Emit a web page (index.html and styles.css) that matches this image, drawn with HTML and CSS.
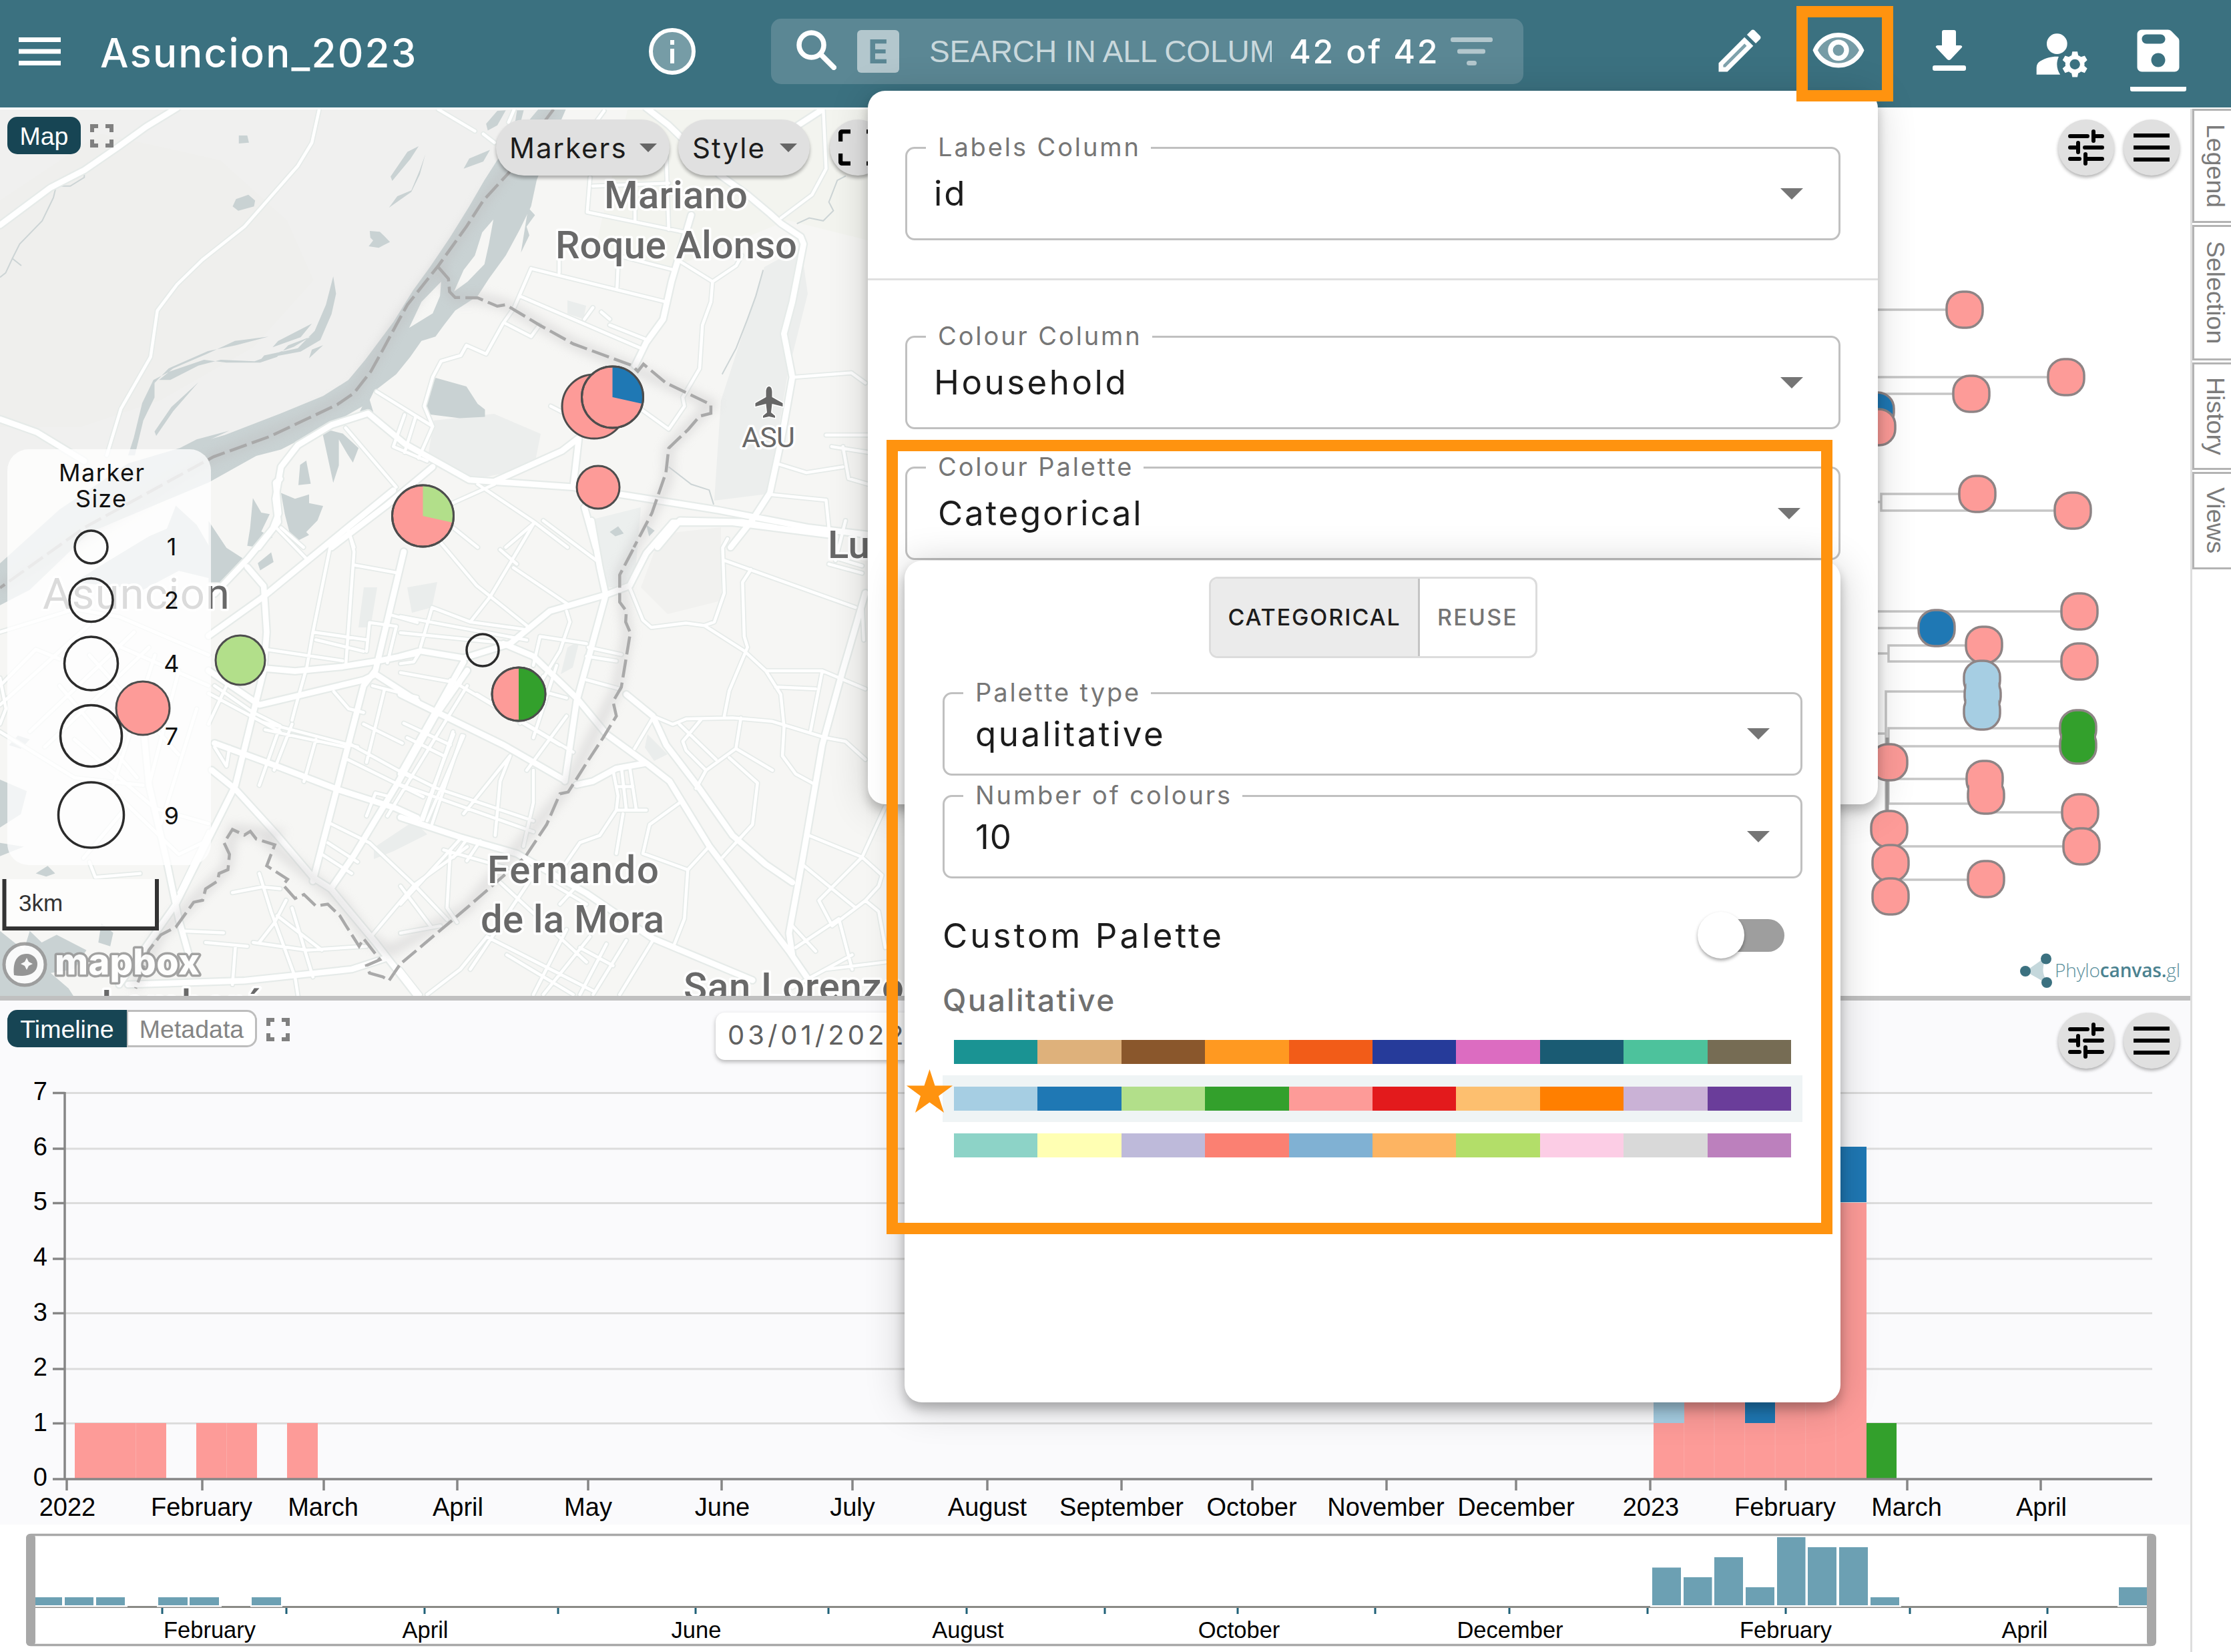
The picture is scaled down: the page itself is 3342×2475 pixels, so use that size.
FILE: index.html
```html
<!DOCTYPE html>
<html lang="en">
<head>
<meta charset="utf-8">
<title>Asuncion_2023</title>
<link rel="stylesheet" href="styles.css">
</head>
<body>
<div class="app">
  <header class="topbar">
    <svg class="burger" viewBox="0 0 63 42"><path d="M0 0h63v7H0zM0 17.500h63v7H0zM0 35h63v7H0z"/></svg>
    <h1 class="title">Asuncion_2023</h1>
    <svg class="info" viewBox="0 0 70 70"><circle cx="35" cy="35" r="32" fill="#fff" fill-opacity=".3" stroke="#fff" stroke-width="6"/><path d="M32 18h6v7h-6zM32 31h6v22h-6z"/></svg>
    <div class="search">
      <svg class="lens" viewBox="0 0 60 60"><circle cx="22.500" cy="22.500" r="18.500" fill="none" stroke="#fff" stroke-width="7.500"/><path d="M36 36L56 56" stroke="#fff" stroke-width="8" stroke-linecap="round"/></svg>
      <span class="badge-e">E</span>
      <span class="placeholder">SEARCH IN ALL COLUM</span>
      <span class="count">42 of 42</span>
      <svg class="filter" viewBox="0 0 63 42"><rect width="63" height="7" rx="3"/><rect x="10" y="17.500" width="42" height="7" rx="3"/><rect x="24" y="35" width="15" height="7" rx="3.500"/></svg>
    </div>
    <nav class="actions">
      <svg class="ic" viewBox="0 0 24 24"><path d="M5 18.080V19h.92l9.060-9.060-.92-.92z" opacity=".35"/><path d="M20.710 7.040c.39-.39.39-1.020 0-1.410l-2.340-2.340c-.2-.2-.45-.29-.71-.29s-.51.100-.7.290l-1.830 1.830 3.750 3.750 1.830-1.830zM3 17.250V21h3.750L17.810 9.940l-3.750-3.750L3 17.250zM5.920 19H5v-.92l9.060-9.060.92.920L5.920 19z"/></svg>
      <svg class="ic eye" viewBox="0 0 24 24"><path d="M12 6c-3.790 0-7.170 2.130-8.820 5.500C4.830 14.870 8.210 17 12 17s7.170-2.130 8.820-5.500C19.170 8.130 15.790 6 12 6z" opacity=".3"/><path fill-rule="evenodd" d="M12 4C7 4 2.730 7.110 1 11.500 2.730 15.890 7 19 12 19s9.270-3.110 11-7.500C21.270 7.110 17 4 12 4zm0 13c-3.790 0-7.170-2.130-8.820-5.500C4.830 8.130 8.210 6 12 6s7.170 2.130 8.820 5.500C19.170 14.870 15.790 17 12 17zM12 7a4.500 4.500 0 1 0 0 9 4.500 4.500 0 0 0 0-9zm0 6.900a2.400 2.400 0 1 1 0-4.800 2.400 2.400 0 0 1 0 4.800z"/></svg>
      <svg class="dl" viewBox="0 0 50 62"><path d="M17 0h15a3 3 0 0 1 3 3v20h7q4 1 1 4L27 44q-2.500 2-5 0L6 27q-3-3 1-4h7V3a3 3 0 0 1 3-3z"/><rect y="53" width="50" height="8" rx="3"/></svg>
      <svg class="user" viewBox="0 0 24 24"><circle cx="10" cy="8" r="4"/><path d="M10.670 13.020c-.22-.01-.44-.02-.67-.02-2.420 0-4.680.67-6.610 1.820-.88.520-1.390 1.500-1.390 2.530V20h9.260c-.79-1.130-1.260-2.510-1.260-4 0-1.070.25-2.070.67-2.980zM20.750 16c0-.22-.03-.42-.06-.63l1.140-1.010-1-1.730-1.450.49c-.32-.27-.68-.48-1.080-.63L18 11h-2l-.3 1.490c-.4.15-.76.36-1.080.63l-1.450-.49-1 1.730 1.140 1.010c-.03.21-.06.41-.06.63s.03.42.06.63l-1.140 1.010 1 1.730 1.450-.49c.32.27.68.48 1.080.63L16 21h2l.3-1.490c.4-.15.76-.36 1.080-.63l1.450.49 1-1.730-1.140-1.010c.03-.21.06-.41.06-.63zM17 18c-1.100 0-2-.9-2-2s.9-2 2-2 2 .9 2 2-.9 2-2 2z"/></svg>
      <span class="save"><svg class="ic" viewBox="0 0 24 24"><path d="M17.590 3.590c-.38-.38-.89-.59-1.420-.59H5c-1.110 0-2 .9-2 2v14c0 1.100.9 2 2 2h14c1.100 0 2-.9 2-2V7.830c0-.53-.21-1.040-.59-1.410l-2.820-2.830zM12 19c-1.660 0-3-1.340-3-3s1.340-3 3-3 3 1.340 3 3-1.340 3-3 3zm1-10H7c-1.100 0-2-.9-2-2s.9-2 2-2h6c1.100 0 2 .9 2 2s-.9 2-2 2z"/></svg></span>
    </nav>
  </header>

  <div class="main">
    <div class="content">
      <div class="toprow">
        <section class="map">
          <svg class="canvas" viewBox="0 164 1640 1328" width="1640" height="1328">
            <defs>
              <filter id="soft" x="-20%" y="-20%" width="140%" height="140%"><feGaussianBlur stdDeviation="8"/></filter>
              <g id="major">
                <g transform="matrix(.8418 0 0 .4337 0 140)">
                  <path d="M315 50L260 115 210 185 150 265 90 325 0 455M1150 50L1190 110 1280 280 1330 350 1370 415 1390 450 1425 495 1430 520 1410 720 1395 830 1410 980 1390 1200 1370 1380 1340 1470 1300 1568M1460 60L1420 110M1230 420L1195 650 1180 780 1150 860 1130 940M0 1125L65 1170 150 1270M655 1105L590 1145 530 1215 500 1290 490 1400 495 1480 460 1568M655 1105L720 1210 835 1335 1020 1360 1120 1390 1280 1440 1440 1500 1568 1530M590 1568L690 1420 770 1290M880 1340L1000 1235 1030 1190 1020 1360M1040 1430L1060 1568M1170 1568L1210 1475 1320 1480 1380 1500"/>
                </g>
                <g transform="matrix(.4464 0 0 .574 0 660)">
                  <path d="M940 100L925 110 935 190 915 230 830 310 720 400M1320 130L1170 225 880 410 700 510M830 330L885 380 895 500 885 600 790 900 590 1210 400 1420M1355 290L1260 600 1220 640 1130 910 1050 1150M720 790L930 850 1130 910 1330 960 1400 985M700 600L870 690 1220 625 1260 610 1400 680M710 860L790 910 930 1030 1050 1140 1110 1170 1260 1310 1310 1360 1400 1450M890 595L990 602 1150 590 1270 575 1400 555M480 740L500 900 560 1100 600 1250 640 1360M1568 600L1460 720 1330 900 1190 1080 1110 1170M430 1420L820 1410 1060 1390 1180 1380 1300 1350"/>
                </g>
                <g transform="matrix(.4974 0 0 .5421 600 780)">
                  <path d="M575 0L600 130 618 205 530 500 495 720M0 375L60 360 190 380 330 340 450 250 618 205 690 180 740 90 820 5 1000 5 1300 40M310 340L400 375 530 490 620 590 740 670 810 720 930 900 1170 1190 1230 1270M0 480L110 530 310 620 490 715M190 390L0 700M0 820L180 875 350 920 560 1030 760 1155 1060 1270M530 730L580 720 650 685 740 670M680 480L760 540 800 620 900 740 1000 870 1100 950 1180 1000M1400 200L1330 420 1270 620 1210 940 1170 1140 1180 1200"/>
                </g>
              </g>
              <g id="minor">
                <g transform="matrix(.8418 0 0 .4337 0 140)">
                  <path d="M568 55L555 170 530 250 435 460 360 575 315 660 280 750 268 910 215 1090 190 1250M780 55L845 130M860 140L880 170M915 55L905 100M1075 60L1060 100M1050 290L1045 410 1220 480M1130 330L1130 440M1185 200L1190 470M1055 320L1190 310M945 605L1185 720M945 605L915 740 895 795 865 900 830 870 820 905 785 925 770 980 755 1080 770 1150 745 1260M925 700L1140 880M995 540L995 620M1100 590L1098 670M1100 560L1200 610M1210 580L1268 650 1310 595 1320 560M1268 650L1265 720 1250 800 1245 950 1215 1050 1218 1080 1190 1160 1140 1090M900 795L945 840 960 800M1040 780L1055 740M1070 755L1085 780M1085 800L1150 850M1465 55L1470 260 1445 350 1390 430M670 1030L770 1150M720 1110L700 1220 760 1270M740 1115L720 1240M615 1155L705 1360M1415 980L1515 965 1540 1000M1470 1180L1545 1180M1480 1220L1545 1240M1385 1280L1435 1310 1500 1290M1500 1220L1510 1330 1545 1350M1370 1385L1470 1405 1475 1500M980 1080L1010 1110M850 1350L950 1480 1010 1568M950 1485L900 1568M880 1350L800 1420M620 1510L630 1568M500 1500L540 1568M800 1490L850 1568"/>
                </g>
                <g transform="matrix(.4464 0 0 .574 0 660)">
                  <path d="M930 230L1030 310M1170 235L1188 290 1160 590M1188 325L1330 345M1110 270L1050 500 1030 590 990 700 980 730M1050 500L1230 520M1060 520L1220 550M890 545L1150 575M1240 475L1230 550M1240 475L1330 485 1300 580M1310 455L1400 475M720 640L850 710 940 745M700 660L940 760M760 640L700 740M940 745L870 900M980 740L920 860M880 735L1200 800M890 755L1160 800M1060 780L1020 890M1120 655L1170 700 1220 710M1220 740L1350 790M1170 790L1380 880M1160 830L1420 930M1250 640L1400 670M1290 650L1230 840M1520 760L1420 990M1550 770L1450 1000M1568 640L1300 980M1230 980L1260 920 1310 930M1110 1000L1240 1050 1390 1160 1500 1250M1390 1160L1250 1290M1390 1160L1568 1060M1080 1080L1180 1130M1100 1050L1200 1100M870 1130L910 1230 990 1400 1000 1450M960 1200L920 1260 870 1310M980 1220L1050 1400M930 1240L1080 1330M850 1310L1030 1330 1230 1320M610 1280L750 1285M690 1310L830 1320M790 1320L780 1420M780 1180L880 1165 940 1170M300 1100L320 1140 470 1130M0 500L250 440 400 460 700 560M0 690L300 480M0 620L20 700 0 740M0 640L120 545 200 570M100 760L450 500M150 800L500 540M0 760L250 880 480 900M350 520L700 640M250 780L520 960 700 1000M300 560L600 820M200 640L460 880M520 560L380 900M600 600L500 900M660 700L540 1000M280 1090L420 960M360 900L600 1080 680 1050M600 1180L700 1020M720 800L760 850 770 800"/>
                </g>
                <g transform="matrix(.4974 0 0 .5421 600 780)">
                  <path d="M985 50L970 75 975 200 945 280 915 290 860 283 755 295 730 275 690 185M915 290L1035 360 1100 415 1145 480 1155 570 1150 650 1190 700 1250 730M1055 135L1030 170 1035 320 1045 350 990 470 975 540M975 110L1370 240M1100 415L1270 415 1400 465M1130 460L1250 465M1270 415L1235 580M760 540L820 563 860 548 1000 545 1120 555 1280 600 1340 610 1400 660M1025 545L1010 630 920 690 890 740M1010 630L1120 690M990 655L1075 725 1060 840 970 930M905 550L850 610 860 635 920 690M840 563L950 660M840 780L750 840 730 920 865 965 930 900M865 965L855 1100 825 1170M640 690L655 760 650 800 740 800M665 680L680 800M690 680L710 800M650 735L700 735M650 800L600 870 540 890 480 970M670 810L650 920M760 545L705 630M560 440L660 465M565 350L665 370M560 375L650 388M500 250L510 280 480 360 400 480M420 320L560 340M420 320L400 400M400 10L270 210 210 280M340 130L510 235M120 60L230 180 380 290M430 0L590 110M300 80L350 120M0 265L380 330M95 240L60 350M95 240L210 280 370 300M0 310L330 340M0 420L180 450M0 395L40 390 60 360M430 430L360 560M470 400L400 600M500 540L380 690M160 590L60 830M190 595L80 830M0 690L110 740 400 830M0 730L400 860M330 650L300 720 285 870M400 690L400 780 370 900M330 650L190 810M180 880L0 1060M150 910L140 1070 170 1110M0 1010L90 1120M130 910L320 960M160 930L200 880M200 940L240 885M230 480L520 640M150 440L480 620M300 440L500 490M10 560L150 620M20 600L130 650M300 1000L560 1220M210 1240L400 980M260 1150L580 1300M320 1200L520 1310M500 1130L400 1310M570 1150L430 1310M620 1170L540 1310M540 1180L640 1230M680 1160L580 1310M760 1160L660 1310M260 1150L180 1240 80 1310M0 1240L60 1310M0 1140L120 1120M450 1000L560 1060M480 1060L540 1000M1230 870L1390 930 1450 980 1440 1010 1400 1050M1210 950L1370 1070M1460 790L1390 930 1260 1050 1300 1120 1400 1050M1180 1120L1250 1190M1190 1180L1320 1100 1360 1240M1400 1050L1440 1080 1460 1180M1280 1240L1460 1220M1180 1290L1360 1200M1290 120L1390 145M1300 100L1390 125M1340 0L1310 110M1390 230L1395 330"/>
                </g>
              </g>
            </defs>
            <rect y="164" width="1640" height="1328" fill="#f6f6f4"/>
            <path d="M0 164H830L640 420 540 560 480 620 300 690 0 900z" fill="#f0f0ef"/>
            <path d="M0 300L150 200 330 240 430 330 470 420 380 520 240 600 120 640 0 640z" fill="#efefed"/>
            <path d="M940 164H1300V360L1180 330 1010 400 890 380z" fill="#f3f4ef"/>
            <path d="M1145 400L1200 370 1210 440 1180 560 1150 740 1070 750 1080 600z" fill="#eceeed"/>
            <path d="M650 630L740 620 810 650 800 700 700 720 640 690z" fill="#eceeed"/>
            <path d="M880 780L960 760 950 880 905 880z" fill="#ecefee"/>
            <path d="M990 800L1080 790 1080 900 1000 920 960 880z" fill="#f1f1ef"/>
            <path d="M545 880h20l-10 60h-18zM610 880l45-8-8 38-30 8zM850 970l18-10-10 40-18 10zM970 1100l30 30-20 10-14-20zM560 1270l60-40 20 20-50 25-30 12z" fill="#eaedec"/>
            <path d="M850 450l28 8-4 20-24-8z" fill="#eaedec"/>
            <g class="water" transform="matrix(.8418 0 0 .4337 0 140)">
              <path fill-rule="evenodd" d="M960 50L925 130 885 230 862 300 835 390 800 500 765 600 735 680 700 790 650 920 620 990 575 1045 500 1105 400 1180 320 1225 228 1278 106 1437 0 1623V1768L53 1715 159 1517 371 1344 456 1252 500 1230 550 1180 610 1120 655 1070 665 1030 705 970 730 910 750 855 775 840 790 800 810 750 850 700 870 640 900 560 925 470 945 390 955 300 975 200 990 130 1008 50zM878 435L870 520 862 590 832 650 808 684 825 610 845 560 858 480zM785 650L783 700 770 760 728 810 750 720z"/>
              <path d="M900 58L885 110 868 128 865 105 885 60zM920 58h12l-8 60-8-10zM872 195l-12 40-35 25 10-35zM745 182l-15 45-32 75-3-15 30-85zM757 210l-10 70-15 60-40 55 15-40 25-20 15-70zM425 145h15l3 25-18 3zM420 365l22-15 12 20-2 20-28 15-10-15zM658 475l18 3 8 15 10 20-10 10-10 10-18-5 8-20-5-10z"/>
              <path d="M593 632l5 60-8 70-20 90-35 40-70 25 5-12 60-25 30-60 20-90zM478 840l-60 15-50 45-60 50-25 40 20 0 50-50 40-20 60 5 70-50 30-35-40 30-20 40-30 20-60 0-40-10-60 40-30 30-20 80-15 120-10 60 12 0 15-120 20-80 0-50 25-50 70-60 50-20zM353 998l-45 100-30 85-3-15 30-85zM555 795l-60 60-10 22 50-35zM575 870l-25 45 5-30z"/>
              <path d="M408 1165l-50 45-38 15 30-30zM775 982l55 30 20 60 13 20v25l-45 5-62-15 5-70zM655 1040l10 65-25-5zM590 1165l20 10 28 50-10 50-10-30-15-50 0 90-10 60-20-180zM545 1268l8 80-22 5 3-70zM450 1398l15 50 15 5-15 60 20 20-25 35-20-5 5-60zM500 1380l25 20 25-15 0 30 25 10-10 50-20 40 5 10-20 20-15-30-8-60zM1100 1495l10 25-15 10-10-15zM1150 1490l15 20-10 20zM940 395l12 25-15 40 5 30-15 60z"/>
            </g>
            <g class="water" transform="matrix(.4464 0 0 .574 0 660)">
              <path d="M250 370L330 330 500 250 560 230 590 170 660 220 720 300 810 310 760 370 600 340 480 390 380 380zM700 210l60 70 60 30-60 60h-60zM865 320l45-28 8 25-45 22zM0 885l90 30-20 60-70 35zM120 1130l40-20 25 20-30 8zM60 770l40 10-30 25-40-10zM0 1280l80 50 20-50 40 30 50-20 100 40-40 50-80 10 60 40 50 60H0zM340 1260l40 25-10 35-40-10zM0 1050l80 10-80 25z"/>
            </g>
            <g class="stream" transform="matrix(.8418 0 0 .4337 0 140)"><path d="M150 250L150 290 125 320 100 320 95 360 75 440 35 520 22 570 10 620 0 635M22 570L38 595M1505 285L1490 300 1480 350 1475 375 1483 405 1465 440 1440 430 1418 450M1358 610L1345 700 1330 780 1310 880 1285 970M1190 1290L1230 1350 1262 1370 1270 1420"/></g>
            <use href="#minor" class="road minor-case"/>
            <use href="#major" class="road major-case"/>
            <use href="#minor" class="road minor-fill"/>
            <use href="#major" class="road major-fill"/>
            <path class="halo" filter="url(#soft)" d="M657 400L674 437 682 446 716 446 758 457 859 515 955 555 1065 606 1048 623 1002 671 1000 720 976 770 929 860 940 950 925 1030 850 1180 700 1360 584 1425 548 1402 510 1350 400 1260 412 1250 349 1243 340 1300 240 1400 200 1480"/>
            <path class="halo" filter="url(#soft)" d="M829 164L725 300 657 400 593 487 530 588 455 630 320 684 0 881"/>
            <g class="border" transform="matrix(.8418 0 0 .4337 0 140)"><path d="M985 55L960 120 905 275 860 370 830 460 780 595 725 730 705 800 680 890 660 960 630 1035 600 1075 540 1130 480 1185 380 1255 300 1340 150 1500 0 1708M780 600L798 640 800 685 810 705 850 706 885 735 900 730 960 800 1020 865 1125 940 1135 960 1145 935 1185 1000 1265 1075 1265 1105 1245 1115 1225 1160 1190 1225 1185 1310 1160 1450 1128 1568"/></g>
            <g class="border" transform="matrix(.4974 0 0 .5421 600 780)"><path d="M700 80L660 150 660 225 680 250 678 280 692 310 665 460 640 500 650 540 610 600 560 670 505 750 480 755 440 840 375 930 200 1070 0 1225"/></g>
            <g class="border" transform="matrix(.4464 0 0 .574 0 660)"><path d="M1340 1370L1305 1410 1285 1400 1240 1390 1230 1370 1275 1355 1220 1300 1205 1320 1160 1265 1140 1240 1100 1210 1060 1215 1020 1185 990 1195 950 1160 965 1145 895 1110 922 1055 860 1040 840 1020 820 1030 780 1015 752 1050 770 1080 765 1120 735 1130 730 1150 690 1170 680 1200 650 1205 590 1270 540 1290 500 1330 480 1380 455 1430"/></g>
            <g class="place">
              <text x="905" y="312" textLength="215">Mariano</text>
              <text x="832" y="387" textLength="362">Roque Alonso</text>
              <text class="asu" x="1111" y="670" textLength="80">ASU</text>
              <text x="1240" y="836">Lu</text>
              <text x="730" y="1323" textLength="257">Fernando</text>
              <text x="720" y="1397" textLength="275">de la Mora</text>
              <text x="1024" y="1498" textLength="330">San Lorenzo</text>
              <text x="152" y="1524" textLength="242">Lambaré</text>
              <text class="city" x="64" y="912" textLength="280">Asuncion</text>
            </g>
            <path d="M1152 579c3 0 4.500 4 4.500 8v8l16 9v5l-16-4-1.500 13 6 5v3l-9-2-9 2v-3l6-5-1.500-13-16 4v-5l16-9v-8c0-4 1.500-8 4.500-8z" fill="#666" stroke="#fff" stroke-width="3" paint-order="stroke"/>
            <rect x="11" y="673" width="305" height="623" rx="32" fill="#fff" fill-opacity=".76"/>
            <g class="pins">
              <circle cx="890" cy="609" r="48"/>
              <circle cx="917.500" cy="595" r="46"/><path class="blue" d="M917.500 595V549A46 46 0 0 1 962.500 605z"/><circle class="ring" cx="917.500" cy="595" r="46"/>
              <circle cx="896" cy="730" r="32"/>
              <circle cx="633.500" cy="773" r="46"/><path class="lime" d="M633.500 773V727A46 46 0 0 1 678.500 783z"/><circle class="ring" cx="633.500" cy="773" r="46"/>
              <circle class="lime ln" cx="360" cy="989" r="37"/>
              <circle cx="214" cy="1061" r="40"/>
              <circle class="open" cx="723" cy="974" r="24"/>
              <circle cx="777" cy="1040" r="40"/><path class="green" d="M777 1000a40 40 0 0 1 0 80z"/><circle class="ring" cx="777" cy="1040" r="40"/>
            </g>
            <g class="open"><circle cx="136.500" cy="819.500" r="24.500"/><circle cx="136.500" cy="899" r="32.500"/><circle cx="136.500" cy="994" r="40"/><circle cx="136.500" cy="1102.500" r="46"/><circle cx="136.500" cy="1221" r="49"/></g>
            <g class="legend-text"><text x="152" y="721" textLength="128">Marker</text><text x="151" y="760" textLength="76">Size</text><text x="257" y="832">1</text><text x="257" y="912">2</text><text x="257" y="1007">4</text><text x="257" y="1116">7</text><text x="257" y="1235">9</text></g>
            <path d="M6.500 1317V1391H235V1317" fill="#fff" fill-opacity=".75" stroke="#333" stroke-width="6"/>
            <text class="scale" x="28" y="1365">3km</text>
            <g opacity=".9">
              <circle cx="37" cy="1445" r="31" fill="#fff" stroke="#999" stroke-width="5"/>
              <path d="M21 1461c-2-16 2-32 19-32 9 0 16 7 16 15 0 17-19 20-35 17z" fill="#8f8f8f"/>
              <path d="M40 1435l3 6 6 3-6 3-3 6-3-6-6-3 6-3z" fill="#fff"/>
              <text class="mapbox" x="82" y="1460" textLength="217">mapbox</text>
            </g>
          </svg>
          <div class="map-bar">
            <span class="tab on">Map</span>
            <svg class="expand" viewBox="0 0 35 35"><path d="M3 12V3h9M23 3h9v9M32 23v9h-9M12 32H3v-9"/></svg>
            <button class="pill markers">Markers<i class="caret"></i></button>
            <button class="pill style">Style<i class="caret"></i></button>
            <button class="pill fit"><svg viewBox="0 0 60 54"><path d="M3 18V7q0-4 4-4h11M42 3h11q4 0 4 4v11M57 36v11q0 4-4 4H42M18 51H7q-4 0-4-4V36"/></svg></button>
          </div>
        </section>
        <section class="tree">
          <svg class="canvas" viewBox="1640 164 1641 1328" width="1641" height="1328">
            <path class="branch" d="M2780 464H2943M2780 565H3095M2780 590H2953M2962 740H2818V765H3105M2780 752H2818M2780 916H3115M2780 941H2901M2972 967H2829V991H3115M2780 979H2829M2969 1036H2825V1240M2780 1099H2825M3113 1091H2829V1142M2830 1118H3113M2830 1167H2973M2829 1160V1204H2975M2975 1217H3116M2830 1268H3118M2832 1318H2975"/>
            <path class="branch dark" d="M2827 1105V1225"/>
            <g class="leaf" transform="translate(-27 -27)">
              <rect x="2943" y="464"/><rect x="3095" y="565"/><rect x="2953" y="590"/><rect class="blue" x="2810" y="615"/><rect x="2812" y="640"/><rect x="2962" y="740"/><rect x="3105" y="765"/>
              <rect x="3115" y="916"/><rect class="blue" x="2901" y="941"/><rect x="2972" y="966"/><rect x="3115" y="991"/>
              <rect class="sky" x="2969" y="1017"/><rect class="sky" x="2970" y="1041"/><rect class="sky" x="2969" y="1066"/>
              <rect class="green" x="3113" y="1091"/><rect class="green" x="3113" y="1117"/>
              <rect x="2830" y="1142"/><rect x="2973" y="1167"/><rect x="2975" y="1192"/><rect x="3116" y="1217"/><rect x="3118" y="1268"/><rect x="2830" y="1242"/><rect x="2832" y="1293"/><rect x="2832" y="1343"/><rect x="2975" y="1317"/>
            </g>
            <g class="leaf-fill" transform="translate(-24 0)"><rect class="sky" x="2969.500" y="1008" height="68"/><rect class="green" x="3113" y="1083" height="42"/><rect class="pink" x="2974" y="1159" height="41"/></g>
            <path d="M3038 1455L3062 1438Q3054 1455 3064 1470z" fill="#c5d8dc" stroke="#c5d8dc" stroke-width="4"/>
            <g fill="#3b7180"><circle cx="3034" cy="1455" r="8"/><circle cx="3065" cy="1436.500" r="8"/><circle cx="3066" cy="1472" r="8"/></g>
            <text class="phylo" x="3078" y="1464" textLength="188">Phylo<tspan>canvas.</tspan>gl</text>
          </svg>
          <div class="round-buttons">
            <button class="round"><svg viewBox="0 0 54 54"><path d="M3 10h26M39 10h12M38 3v14M3 27h12M15 20v14M25 27h26M3 44h14M27 44h24M26 37v14"/></svg></button>
            <button class="round"><svg viewBox="0 0 54 54"><path class="flat" d="M0 9h54M0 27h54M0 45h54"/></svg></button>
          </div>
        </section>
      </div>
      <div class="splitter"></div>
      <section class="timeline">
        <div class="tl-bar">
          <span class="tab on left">Timeline</span><span class="tab off">Metadata</span>
          <svg class="expand" viewBox="0 0 35 35"><path d="M3 12V3h9M23 3h9v9M32 23v9h-9M12 32H3v-9"/></svg>
          <span class="date">03/01/2022</span>
          <div class="round-buttons">
            <button class="round"><svg viewBox="0 0 54 54"><path d="M3 10h26M39 10h12M38 3v14M3 27h12M15 20v14M25 27h26M3 44h14M27 44h24M26 37v14"/></svg></button>
            <button class="round"><svg viewBox="0 0 54 54"><path class="flat" d="M0 9h54M0 27h54M0 45h54"/></svg></button>
          </div>
        </div>
        <svg class="chart" viewBox="0 1610 3281 674" width="3281" height="674">
          <path d="M97 1637.500H3224M97 1721H3224M97 1802.500H3224M97 1886H3224M97 1967.500H3224M97 2051H3224M97 2132.500H3224" stroke="#dcdcdc" stroke-width="3"/>
          <g fill="#fd9b98"><path d="M112 2132H249V2215H112zM294 2132H385V2215H294zM430 2132H476V2215H430zM2477 2132H2523V1967H2614V2132H2659V1720H2750V1802H2796V2215H2477z"/></g>
          <path d="M203.500 2132V2215M339.500 2132V2215M2522.700 2000V2215M2568 2000V2215M2613.700 2000V2215M2659.200 2000V2215M2704.700 2000V2215M2750 2000V2215" stroke="#fcaaa7" stroke-width="1"/>
          <path d="M2477 2051h46v81h-46z" fill="#a6cee3"/><path d="M2614 2051h45v81h-45zM2750 1718h46v83h-46z" fill="#1f78b4"/><path d="M2796 2132h45v83h-45z" fill="#33a02c"/>
          <path d="M97 1636V2217M79 1637.500H97M79 1721H97M79 1802.500H97M79 1886H97M79 1967.500H97M79 2051H97M79 2132.500H97M79 2216H3224M100 2216v17M303 2216v17M485 2216v17M685 2216v17M881 2216v17M1081 2216v17M1277 2216v17M1479 2216v17M1680 2216v17M1876 2216v17M2077 2216v17M2271 2216v17M2472 2216v17M2675 2216v17M2857 2216v17M3057 2216v17" stroke="#868686" stroke-width="3.500" fill="none"/>
          <g class="ylab"><text x="71" y="1648">7</text><text x="71" y="1731">6</text><text x="71" y="1813">5</text><text x="71" y="1896">4</text><text x="71" y="1979">3</text><text x="71" y="2061">2</text><text x="71" y="2144">1</text><text x="71" y="2226">0</text></g>
          <g class="xlab"><text x="101" y="2271">2022</text><text x="302" y="2271">February</text><text x="484" y="2271">March</text><text x="686" y="2271">April</text><text x="881" y="2271">May</text><text x="1082" y="2271">June</text><text x="1277" y="2271">July</text><text x="1479" y="2271">August</text><text x="1680" y="2271">September</text><text x="1875" y="2271">October</text><text x="2076" y="2271">November</text><text x="2271" y="2271">December</text><text x="2473" y="2271">2023</text><text x="2674" y="2271">February</text><text x="2856" y="2271">March</text><text x="3058" y="2271">April</text></g>
        </svg>
        <svg class="brush" viewBox="0 2284 3281 191" width="3281" height="191">
          <path d="M53 2407.500H3216" stroke="#8a8a86" stroke-width="3"/>
          <path d="M53 2406H191M235 2406H332M375 2406H423M2472 2406H2848M3172 2406H3216" stroke="#fff" stroke-width="3"/>
          <path d="M243 2409v9M429 2409v9M636 2409v9M836 2409v9M1042 2409v9M1241 2409v9M1448 2409v9M1655 2409v9M1854 2409v9M2060 2409v9M2261 2409v9M2468 2409v9M2675 2409v9M2861 2409v9M3067 2409v9" stroke="#1f6178" stroke-width="3"/>
          <path fill="#6ca0b3" d="M53 2393h40v12H53zM97 2393h43v12H97zM144 2393h43v12h-43zM237 2393h44v12h-44zM284 2393h44v12h-44zM377 2393h44v12h-44zM2475 2348.500h43V2405h-43zM2522 2363h42.500v42H2522zM2568 2333h43v72h-43zM2615 2378h43v27h-43zM2662 2303h42.500v102H2662zM2708 2318h43v87h-43zM2755 2318h43v87h-43zM2802 2393h43v12h-43zM3174 2378h42v27h-42z"/>
          <rect x="41" y="2299.500" width="3186" height="165" rx="5" fill="none" stroke="#a8a8a8" stroke-width="3.500"/>
          <rect x="39" y="2298" width="14" height="168" rx="6" fill="#a8a8a8"/><rect x="3216" y="2298" width="14" height="168" rx="6" fill="#a8a8a8"/>
          <g class="blab"><text x="314" y="2454">February</text><text x="637" y="2454">April</text><text x="1043" y="2454">June</text><text x="1450" y="2454">August</text><text x="1856" y="2454">October</text><text x="2262" y="2454">December</text><text x="2675" y="2454">February</text><text x="3033" y="2454">April</text></g>
        </svg>
      </section>
    </div>
    <aside class="side">
      <span class="stab" style="height:171px">Legend</span>
      <span class="stab" style="height:203px">Selection</span>
      <span class="stab" style="height:161px">History</span>
      <span class="stab" style="height:146px">Views</span>
    </aside>
  </div>

  <div class="popup">
    <div class="field"><label>Labels Column</label><span>id</span><i class="caret big"></i></div>
    <hr>
    <div class="field"><label>Colour Column</label><span class="wide">Household</span><i class="caret big"></i></div>
    <div class="field shift"><label>Colour Palette</label><span>Categorical</span><i class="caret big"></i></div>
  </div>

  <div class="menu">
    <div class="toggle"><span class="sel">CATEGORICAL</span><span>REUSE</span></div>
    <div class="field small"><label>Palette type</label><span class="wide">qualitative</span><i class="caret big"></i></div>
    <div class="field small second"><label>Number of colours</label><span class="num">10</span><i class="caret big"></i></div>
    <div class="custom"><span>Custom Palette</span><span class="switch"><i></i></span></div>
    <h2>Qualitative</h2>
    <div class="swatches"><i style="background:#1a9393"></i><i style="background:#deb17b"></i><i style="background:#8a572c"></i><i style="background:#ff9921"></i><i style="background:#f25c18"></i><i style="background:#263b9a"></i><i style="background:#dc6cc1"></i><i style="background:#1a5b73"></i><i style="background:#4dc29c"></i><i style="background:#766c54"></i></div>
    <div class="swatches picked"><i style="background:#a6cee3"></i><i style="background:#1f78b4"></i><i style="background:#b2df8a"></i><i style="background:#33a02c"></i><i style="background:#fd9b98"></i><i style="background:#e31a1c"></i><i style="background:#fdbf6f"></i><i style="background:#ff7f00"></i><i style="background:#cab2d6"></i><i style="background:#6a3d9a"></i></div>
    <div class="swatches"><i style="background:#8dd3c7"></i><i style="background:#ffffb3"></i><i style="background:#bebada"></i><i style="background:#fb8072"></i><i style="background:#80b1d3"></i><i style="background:#fdb462"></i><i style="background:#b3de69"></i><i style="background:#fccde5"></i><i style="background:#d9d9d9"></i><i style="background:#bc80bd"></i></div>
  </div>

  <div class="mark mark-eye"></div>
  <div class="mark mark-palette"></div>
  <svg class="star" viewBox="0 0 69 65"><path d="M34.500 0l8 24.500H69L48 40l8 25-21.500-15.500L13 65l8-25L0 24.500h26.500z"/></svg>
</div>
</body>
</html>
```
FILE: styles.css
```css
* { box-sizing: border-box; }
body { margin: 0; background: #fff; font-family: Inter, sans-serif; color: #1c1c1c; }
button { border: 0; padding: 0; font: inherit; color: inherit; }
.app { position: relative; width: 3342px; height: 2475px; overflow: hidden; display: flex; flex-direction: column; }

/* top bar */
.topbar { height: 161px; flex: none; background: #3b7180; display: flex; align-items: flex-start; color: #fff; }
.topbar svg { fill: #fff; flex: none; }
.burger { width: 63px; height: 42px; margin: 56px 0 0 28px; }
.title { margin: 43px 0 0 59px; width: 480px; font-size: 60px; line-height: 73px; font-weight: 500; letter-spacing: 2.2px; white-space: nowrap; }
.info { width: 70px; height: 70px; margin: 42px 0 0 342px; }
.search { width: 1127px; height: 98px; margin: 28px 0 0 113px; border-radius: 15px; background: #5b8794; display: flex; align-items: center; padding-left: 38px; }
.lens { width: 60px; height: 60px; margin-top: -4px; }
.badge-e { width: 63px; height: 64px; margin-left: 31px; border-radius: 6px; background: #b3c7cd; color: #5b8794; font-size: 50px; line-height: 64px; font-weight: 700; text-align: center; }
.placeholder { margin-left: 45px; width: 513px; overflow: hidden; white-space: nowrap; font: 46px/60px "Liberation Sans", sans-serif; letter-spacing: -.1px; color: #c9d8dc; }
.count { margin-left: 26px; width: 226px; font-size: 50px; line-height: 60px; font-weight: 500; letter-spacing: 2.8px; white-space: nowrap; }
.filter { width: 63px; height: 42px; margin-left: 16px; }
.topbar .filter { fill: #b3c7cd; }
.actions { display: flex; align-items: flex-start; margin: 34px 0 0 282px; }
.ic { width: 84px; height: 84px; }
.eye { margin: 1px 0 0 64px; }
.dl { width: 50px; height: 62px; margin: 11px 0 0 99px; }
.user { width: 92px; height: 92px; margin: 1px 0 0 98px; }
.save { width: 84px; height: 103px; margin-left: 56px; border-bottom: 7px solid #fff; border-radius: 3px; }

/* panes */
.main { flex: 1; display: flex; padding-top: 3px; }
.content { width: 3281px; display: flex; flex-direction: column; }
.toprow { display: flex; height: 1328px; }
.map { position: relative; width: 1640px; overflow: hidden; }
.tree { position: relative; width: 1641px; display: flex; justify-content: flex-end; }
.canvas { position: absolute; left: 0; top: 0; display: block; }
.splitter { height: 7px; background: #c0c0c0; }
.timeline { flex: 1; background: linear-gradient(#fafafc 785px, #fff 785px); display: flex; flex-direction: column; }

.water { fill: #c9d2d3; }
.stream path { fill: none; stroke: #ccd4d5; stroke-width: 2; vector-effect: non-scaling-stroke; }
.road { fill: none; stroke-linejoin: round; stroke-linecap: round; }
#major path, #minor path { vector-effect: non-scaling-stroke; }
.minor-case { stroke: #e6ebe9; stroke-width: 8; }
.major-case { stroke: #e6ebe9; stroke-width: 13; }
.minor-fill { stroke: #fff; stroke-width: 4.5; }
.major-fill { stroke: #fff; stroke-width: 8.5; }
.halo { fill: none; stroke: #bcbabc; stroke-width: 14; opacity: .42; }
.border path { fill: none; stroke: #a9a9a9; stroke-width: 4.5; stroke-dasharray: 27 8; vector-effect: non-scaling-stroke; }
.place text { font: 500 58px Roboto, sans-serif; fill: #696969; stroke: #fff; stroke-width: 7; paint-order: stroke; stroke-linejoin: round; }
.place .asu { font-size: 43px; font-weight: 400; }
.place .city { font-size: 65px; font-weight: 400; }
.pins circle { fill: #fd9b98; stroke: #4d4d4d; stroke-width: 3; }
.pins .ring { fill: none; }
.blue { fill: #1f78b4; }
.lime, .pins .ln { fill: #b2df8a; }
.green { fill: #33a02c; }
.sky { fill: #a6cee3; }
.pink { fill: #fd9b98; }
.open circle, .pins .open { fill: none; stroke: #2b2b2b; stroke-width: 3.5; }
.legend-text text { font: 36px Inter, sans-serif; fill: #111; text-anchor: middle; }
.scale { font: 35px "Liberation Sans", sans-serif; fill: #333; }
.mapbox { font: 800 54px Inter, sans-serif; fill: #fff; stroke: #999; stroke-width: 7; paint-order: stroke; stroke-linejoin: round; }

.map-bar { position: relative; display: flex; align-items: flex-start; padding: 11px 0 0 11px; }
.tab { height: 56px; border-radius: 15px; font: 37.5px/58px "Liberation Sans", sans-serif; text-align: center; flex: none; }
.map-bar .tab { width: 110px; }
.on { background: #174554; color: #fff; }
.tab.left { width: 179px; border-radius: 15px 0 0 15px; }
.tab.off { width: 195px; border: 3px solid #bdbdbd; border-left-width: 2px; border-radius: 0 15px 15px 0; background: #fff; color: #858585; line-height: 52px; }
.expand { width: 35px; height: 35px; margin: 11px 0 0 14px; flex: none; }
.expand path { fill: none; stroke: #808080; stroke-width: 6; }
.pill { height: 84px; margin-top: 4px; border-radius: 42px; background: #e0e0e0; box-shadow: 0 4px 5px rgba(0,0,0,.3); display: flex; align-items: center; font-size: 42px; letter-spacing: 2px; flex: none; }
.markers { width: 260px; margin-left: 573px; padding-left: 20px; }
.style { width: 197px; margin-left: 13px; padding-left: 21px; }
.fit { width: 84px; margin-left: 30px; padding-left: 13px; }
.fit svg { width: 60px; height: 54px; }
.fit path { fill: none; stroke: #000; stroke-width: 6.5; }
.caret { width: 0; height: 0; border: 13px solid transparent; border-top: 13px solid #666; border-bottom: 0; flex: none; }
.markers .caret, .style .caret { margin-left: auto; margin-right: 19px; }

.branch { fill: none; stroke: #c6c6c6; stroke-width: 3.5; }
.branch.dark { stroke: #999; stroke-width: 5; }
.leaf rect { width: 54px; height: 54px; rx: 24px; stroke: #8e8485; stroke-width: 3.5; }
.leaf rect:not([class]) { fill: #fd9b98; }
.leaf-fill rect { width: 48px; }
.phylo { font: 300 28px "Open Sans", sans-serif; fill: #5a8f9c; }
.phylo tspan { font-weight: 600; fill: #4b8290; }
.round-buttons { position: relative; display: flex; gap: 14px; padding: 15px 16px 0 0; margin-left: auto; }
.round { width: 84px; height: 84px; border-radius: 50%; background: #e0e0e0; box-shadow: 0 3px 5px rgba(0,0,0,.3); display: flex; align-items: center; justify-content: center; }
.round svg { width: 54px; height: 54px; }
.round path { fill: none; stroke: #000; stroke-width: 6; stroke-linecap: round; }
.round .flat { stroke-linecap: butt; }

/* timeline */
.tl-bar { height: 111px; display: flex; align-items: flex-start; padding: 14px 0 0 11px; }
.tl-bar .expand { margin-top: 12px; }
.tl-bar .round-buttons { padding-top: 4px; }
.date { width: 340px; height: 71px; margin: 4px 0 0 638px; padding-left: 18px; border-radius: 14px; background: #fff; box-shadow: 0 3px 6px rgba(0,0,0,.28); font-size: 40px; line-height: 68px; letter-spacing: 5px; color: #606060; }
.chart, .brush { display: block; }
.chart text, .brush text { font: 38px "Liberation Sans", sans-serif; fill: #000; text-anchor: middle; }
.brush text { font-size: 34.5px; }
.chart .ylab text { text-anchor: end; }

/* side tabs */
.side { width: 61px; border-left: 3px solid #dedede; display: flex; flex-direction: column; margin-top: -1px; overflow: hidden; }
.stab { width: 70px; flex: none; border: 3px solid #b3b3b3; margin-bottom: 3px; writing-mode: vertical-rl; font: 37.5px/56px "Liberation Sans", sans-serif; color: #7b7b7b; text-align: center; padding-right: 4px; }

/* view options popup */
.popup, .menu { position: absolute; background: #fff; border-radius: 26px; }
.popup { left: 1300px; top: 136px; width: 1513px; height: 1069px; padding-top: 84px; box-shadow: 0 10px 16px rgba(0,0,0,.22), 0 6px 60px rgba(0,0,0,.16); }
.popup hr { height: 3px; margin: 57px 0 83px; border: 0; background: #e0e0e0; }
.field { position: relative; width: 1401px; height: 140px; margin-left: 56px; border: 3px solid #c0c0c0; border-radius: 14px; display: flex; align-items: center; padding: 0 53px 0 40px; }
.field label { position: absolute; left: 28px; top: -27px; padding: 0 15px 0 18px; background: #fff; font-size: 38px; line-height: 48px; letter-spacing: 2.9px; color: #767676; white-space: nowrap; }
.field span { font-size: 51px; line-height: 60px; letter-spacing: 2.8px; }
.field .wide { letter-spacing: 3.5px; }
.field .num { letter-spacing: 1px; }
.field .big { border: 17px solid transparent; border-top: 17px solid #757575; border-bottom: 0; margin-left: auto; }
.shift { margin-top: 56px; padding: 0 57px 0 46px; }

.menu { left: 1355px; top: 840px; width: 1402px; height: 1261px; padding: 24px 57px 0; box-shadow: 0 10px 16px rgba(0,0,0,.24), 0 6px 60px rgba(0,0,0,.2); }
.toggle { display: flex; width: 492px; height: 122px; margin: 0 0 51px 399px; border: 3px solid #dcdcdc; border-radius: 13px; overflow: hidden; font-size: 34px; font-weight: 500; line-height: 116px; color: #757575; }
.toggle span { flex: 1; text-align: center; letter-spacing: 2.2px; }
.toggle .sel { flex: 0 0 313px; background: #ebebeb; color: #1c1c1c; border-right: 3px solid #c4c4c4; letter-spacing: 1.9px; }
.small { width: 1288px; height: 125px; margin: 0; padding: 0 46px 0 46px; }
.second { margin-top: 29px; }
.custom { display: flex; align-items: center; height: 72px; margin-top: 49px; font-size: 51px; letter-spacing: 4.1px; }
.switch { width: 112px; height: 49px; margin-left: auto; margin-right: 27px; border-radius: 25px; background: #9e9e9e; display: flex; align-items: center; }
.switch i { width: 70px; height: 70px; flex: none; margin-left: -18px; border-radius: 50%; background: #fff; box-shadow: 0 3px 5px rgba(0,0,0,.35); }
.menu h2 { margin: 28px 0 10px; font-size: 46px; line-height: 66px; font-weight: 500; letter-spacing: 2.3px; color: #707070; }
.swatches { display: flex; height: 70px; padding: 17px; }
.swatches i { flex: 1; }
.picked { background: #eff4f5; }

/* annotations */
.mark { position: absolute; border: 17px solid #ff930f; }
.mark-eye { left: 2691px; top: 9px; width: 145px; height: 143px; }
.mark-palette { left: 1328px; top: 659px; width: 1417px; height: 1190px; }
.star { position: absolute; left: 1358px; top: 1602px; width: 69px; height: 65px; fill: #ff930f; }
```
